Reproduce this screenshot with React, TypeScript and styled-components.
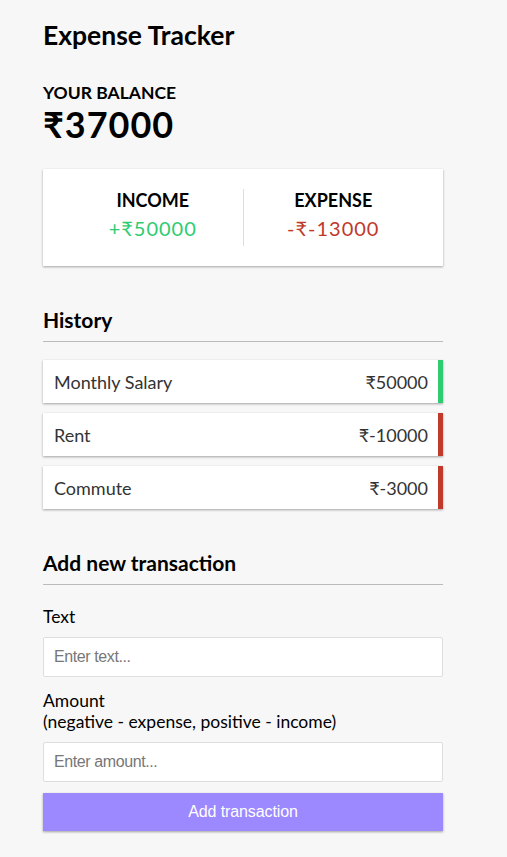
import React from "react";
import styled, { createGlobalStyle } from "styled-components";

const Global = createGlobalStyle`
  * { box-sizing: border-box; }
  html, body { margin: 0; padding: 0; }
  body {
    background-color: #f7f7f7;
    font-family: Lato, "DejaVu Sans", sans-serif;
    color: #000;
  }
`;

const Container = styled.div`
  width: 400px;
  margin: 0 0 0 43px;
  padding: 19px 0 24px;
`;

const Title = styled.h2`
  margin: 0;
  font-size: 26.5px;
  line-height: 32px;
  font-weight: 700;
`;

const BalanceLabel = styled.h4`
  margin: 31px 0 0;
  font-size: 17.5px;
  line-height: 21px;
  font-weight: 700;
  text-transform: uppercase;
`;

const BalanceValue = styled.h1`
  margin: 0;
  font-size: 36px;
  line-height: 42px;
  font-weight: 700;
  letter-spacing: 1px;
`;

const Summary = styled.div`
  background: #fff;
  box-shadow: 0 1px 3px rgba(0, 0, 0, 0.12), 0 1px 2px rgba(0, 0, 0, 0.24);
  padding: 20px;
  display: flex;
  margin: 24px 0 0;
`;

const SummaryCol = styled.div<{ $divider?: boolean }>`
  flex: 1;
  text-align: center;
  border-right: ${(p) => (p.$divider ? "1px solid #dedede" : "none")};
`;

const SummaryLabel = styled.h4`
  margin: 0;
  font-size: 18px;
  line-height: 22px;
  font-weight: 700;
  text-transform: uppercase;
`;

const Money = styled.p<{ $type: "plus" | "minus" }>`
  margin: 5px 0;
  font-size: 20px;
  line-height: 25px;
  letter-spacing: 1px;
  color: ${(p) => (p.$type === "plus" ? "#2ecc71" : "#c0392b")};
`;

const SectionTitle = styled.h3`
  margin: 41px 0 0;
  padding-bottom: 9px;
  border-bottom: 1px solid #bbb;
  font-size: 21px;
  line-height: 25px;
  font-weight: 700;
`;

const List = styled.ul`
  list-style: none;
  padding: 0;
  margin: 18px 0 0;
  display: flex;
  flex-direction: column;
  gap: 10px;
`;

const Item = styled.li<{ $type: "plus" | "minus" }>`
  background: #fff;
  box-shadow: 0 1px 3px rgba(0, 0, 0, 0.12), 0 1px 2px rgba(0, 0, 0, 0.24);
  color: #333;
  display: flex;
  justify-content: space-between;
  align-items: center;
  height: 43px;
  padding: 0 10px 0 11px;
  font-size: 18px;
  line-height: 22px;
  border-right: 5px solid ${(p) => (p.$type === "plus" ? "#2ecc71" : "#c0392b")};
`;

const Form = styled.form`
  display: flex;
  flex-direction: column;
  gap: 3px;
  margin-top: 11px;
`;

const Field = styled.div``;

const Label = styled.label`
  display: block;
  margin: 10px 0;
  font-size: 17.5px;
  line-height: 21px;
`;

const Input = styled.input`
  display: block;
  width: 100%;
  border: 1px solid #dedede;
  border-radius: 2px;
  background: #fff;
  font-family: "Liberation Sans", Arial, sans-serif;
  font-size: 16px;
  letter-spacing: -0.4px;
  padding: 10px;
  height: 40px;
  outline: none;
  &::placeholder { color: #777; }
`;

const Button = styled.button`
  display: block;
  width: 100%;
  border: 0;
  background: #9c88ff;
  color: #fff;
  box-shadow: 0 1px 3px rgba(0, 0, 0, 0.12), 0 1px 2px rgba(0, 0, 0, 0.24);
  font-family: "Liberation Sans", Arial, sans-serif;
  font-size: 16px;
  letter-spacing: -0.1px;
  padding: 10px;
  height: 38px;
  margin: 8px 0 0;
  cursor: pointer;
`;

const transactions = [
  { id: 1, text: "Monthly Salary", amount: "₹50000", type: "plus" as const },
  { id: 2, text: "Rent", amount: "₹-10000", type: "minus" as const },
  { id: 3, text: "Commute", amount: "₹-3000", type: "minus" as const },
];

export default function App() {
  return (
    <>
      <Global />
      <Container>
        <Title>Expense Tracker</Title>
        <BalanceLabel>Your Balance</BalanceLabel>
        <BalanceValue>₹37000</BalanceValue>
        <Summary>
          <SummaryCol $divider>
            <SummaryLabel>Income</SummaryLabel>
            <Money $type="plus">+₹50000</Money>
          </SummaryCol>
          <SummaryCol>
            <SummaryLabel>Expense</SummaryLabel>
            <Money $type="minus">-₹-13000</Money>
          </SummaryCol>
        </Summary>
        <SectionTitle>History</SectionTitle>
        <List>
          {transactions.map((t) => (
            <Item key={t.id} $type={t.type}>
              <span>{t.text}</span>
              <span>{t.amount}</span>
            </Item>
          ))}
        </List>
        <SectionTitle>Add new transaction</SectionTitle>
        <Form onSubmit={(e) => e.preventDefault()}>
          <Field>
            <Label htmlFor="text">Text</Label>
            <Input id="text" type="text" placeholder="Enter text..." />
          </Field>
          <Field>
            <Label htmlFor="amount">
              Amount <br />
              (negative - expense, positive - income)
            </Label>
            <Input id="amount" type="number" placeholder="Enter amount..." />
          </Field>
          <Button type="submit">Add transaction</Button>
        </Form>
      </Container>
    </>
  );
}
